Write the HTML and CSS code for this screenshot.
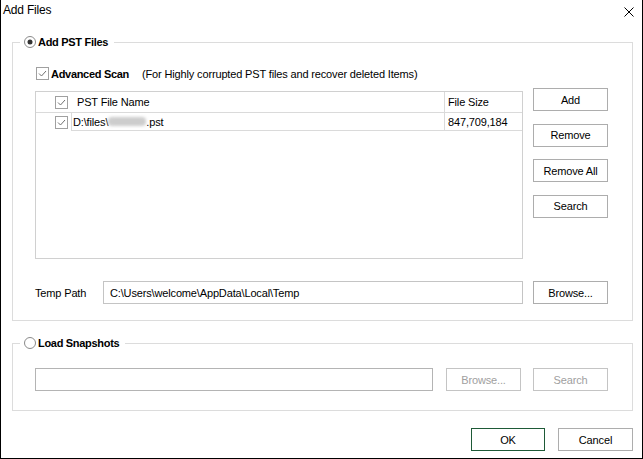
FILE: index.html
```html
<!DOCTYPE html>
<html>
<head>
<meta charset="utf-8">
<title>Add Files</title>
<link rel="stylesheet" href="styles.css">
</head>
<body>
<div class="window">
  <div class="titlebar">
    <span class="title">Add Files</span>
    <svg class="close" width="10" height="10" viewBox="0 0 10 10"><path d="M0.5 0.5 L9.5 9.5 M9.5 0.5 L0.5 9.5" stroke="#000" stroke-width="1" fill="none"/></svg>
  </div>

  <div class="group group-pst">
    <div class="legend">
      <svg class="radio" width="12" height="12" viewBox="0 0 12 12"><circle cx="6" cy="6" r="5.5" fill="#fff" stroke="#8a8a8a"/><circle cx="6" cy="6" r="2.5" fill="#333"/></svg>
      <span class="bold">Add PST Files</span>
    </div>

    <div class="scan-row">
      <svg class="cb" width="13" height="13" viewBox="0 0 13 13"><rect x="0.5" y="0.5" width="12" height="12" fill="#fff" stroke="#a0a0a0"/><path d="M3 6.5 L5.5 9 L10 4" fill="none" stroke="#707070" stroke-width="1"/></svg>
      <span class="bold">Advanced Scan</span>
      <span class="hint">(For Highly corrupted PST files and recover deleted Items)</span>
    </div>

    <div class="list-row">
      <div class="listview">
        <div class="lv-header">
          <div class="lv-check"><svg class="cb" width="13" height="13" viewBox="0 0 13 13"><rect x="0.5" y="0.5" width="12" height="12" fill="#fff" stroke="#a0a0a0"/><path d="M3 6.5 L5.5 9 L10 4" fill="none" stroke="#707070" stroke-width="1"/></svg></div>
          <div class="hd-name">PST File Name</div>
          <div class="hd-size">File Size</div>
        </div>
        <div class="lv-row">
          <div class="lv-check"><svg class="cb" width="13" height="13" viewBox="0 0 13 13"><rect x="0.5" y="0.5" width="12" height="12" fill="#fff" stroke="#a0a0a0"/><path d="M3 6.5 L5.5 9 L10 4" fill="none" stroke="#707070" stroke-width="1"/></svg></div>
          <div class="cell-name">D:\files\<span class="blurred"></span>.pst</div>
          <div class="cell-size">847,709,184</div>
        </div>
      </div>
      <div class="btn-col">
        <button class="btn">Add</button>
        <button class="btn">Remove</button>
        <button class="btn">Remove All</button>
        <button class="btn">Search</button>
      </div>
    </div>

    <div class="path-row">
      <span class="path-label">Temp Path</span>
      <div class="input path-input">C:\Users\welcome\AppData\Local\Temp</div>
      <button class="btn">Browse...</button>
    </div>
  </div>

  <div class="group group-snap">
    <div class="legend">
      <svg class="radio" width="12" height="12" viewBox="0 0 12 12"><circle cx="6" cy="6" r="5.5" fill="#fff" stroke="#8a8a8a"/></svg>
      <span class="bold">Load Snapshots</span>
    </div>
    <div class="snap-row">
      <div class="input snap-input"></div>
      <button class="btn disabled snap-browse">Browse...</button>
      <button class="btn disabled snap-search">Search</button>
    </div>
  </div>

  <div class="footer">
    <button class="btn ok">OK</button>
    <button class="btn cancel">Cancel</button>
  </div>
</div>
</body>
</html>
```

FILE: styles.css
```css
html, body {
  margin: 0;
  padding: 0;
  background: #fff;
}

body {
  font-family: "Liberation Sans", Arial, sans-serif;
  font-size: 11px;
  letter-spacing: -0.15px;
  color: #000;
}

.window {
  width: 643px;
  height: 459px;
  box-sizing: border-box;
  border: 1px solid #000;
  border-top: none;
  display: flex;
  flex-direction: column;
  background: #fff;
}

.titlebar {
  height: 21px;
  display: flex;
  justify-content: space-between;
  align-items: flex-start;
  padding: 0 8px 0 2px;
}

.title {
  font-size: 12px;
  line-height: 21px;
  letter-spacing: -0.2px;
}

.close {
  margin-top: 7px;
  display: block;
}

.group {
  position: relative;
  border: 1px solid #dcdcdc;
  margin: 21px 9px 0 11px;
}

.group-pst {
  padding: 24px 24px 16px 22px;
}

.group-snap {
  margin-top: 22px;
  padding: 24px 24px 19px 22px;
}

.legend {
  position: absolute;
  top: -8px;
  left: 7px;
  height: 14px;
  display: flex;
  align-items: center;
  gap: 2px;
  padding: 0 6px 0 4px;
  background: #fff;
}

.radio {
  display: block;
}

.bold {
  font-weight: bold;
  line-height: 14px;
  letter-spacing: -0.3px;
}

.scan-row {
  height: 13px;
  display: flex;
  align-items: center;
  margin-left: 1px;
}

.cb {
  display: block;
}

.scan-row .cb {
  margin-right: 2px;
}

.hint {
  margin-left: 13px;
}

.list-row {
  display: flex;
  gap: 10px;
  margin-top: 8px;
}

.listview {
  width: 488px;
  height: 168px;
  box-sizing: border-box;
  border: 1px solid #d0d0d0;
  margin-top: 3px;
}

.lv-header {
  height: 20px;
  display: flex;
  border-bottom: 1px solid #dadada;
}

.lv-check {
  width: 35px;
  padding-left: 19px;
  box-sizing: border-box;
  display: flex;
  align-items: center;
}

.hd-name {
  flex: 1;
  display: flex;
  align-items: center;
  padding-left: 6px;
}

.hd-size,
.cell-size {
  width: 78px;
  box-sizing: border-box;
  border-left: 1px solid #dadada;
  padding-left: 3px;
  display: flex;
  align-items: center;
}

.lv-row {
  height: 18px;
  display: flex;
}

.cell-name {
  flex: 1;
  display: flex;
  align-items: center;
  border-left: 1px solid #dadada;
  border-bottom: 1px solid #dadada;
  padding-left: 1px;
}

.cell-size {
  border-bottom: 1px solid #dadada;
}

.blurred {
  display: inline-block;
  width: 38px;
  height: 9px;
  border-radius: 4px;
  background: #cdcdcd;
  filter: blur(1.5px);
}

.btn-col {
  display: flex;
  flex-direction: column;
  gap: 12.5px;
}

.btn {
  width: 75px;
  height: 23px;
  box-sizing: border-box;
  border: 1px solid #adadad;
  background: #fff;
  font-family: "Liberation Sans", Arial, sans-serif;
  font-size: 11px;
  letter-spacing: -0.15px;
  color: #000;
  padding: 0;
  margin: 0;
  text-align: center;
}

.btn.disabled {
  color: #a0a0a0;
  border-color: #c4c4c4;
}

.path-row {
  display: flex;
  align-items: center;
  margin-top: 22px;
}

.path-label {
  width: 68px;
  box-sizing: border-box;
}

.input {
  height: 23px;
  box-sizing: border-box;
  border: 1px solid #c4c4c4;
  background: #fff;
  display: flex;
  align-items: center;
}

.path-input {
  width: 420px;
  padding-left: 6px;
  margin-right: 10px;
}

.snap-row {
  display: flex;
}

.snap-input {
  width: 398px;
  border-color: #b4b4b4;
}

.snap-browse {
  margin-left: 13px;
}

.snap-search {
  margin-left: 12px;
}

.footer {
  display: flex;
  justify-content: flex-end;
  gap: 13px;
  margin-top: 17px;
  padding-right: 9px;
}

.btn.ok {
  width: 74px;
  border-color: #1e5a37;
}
```
